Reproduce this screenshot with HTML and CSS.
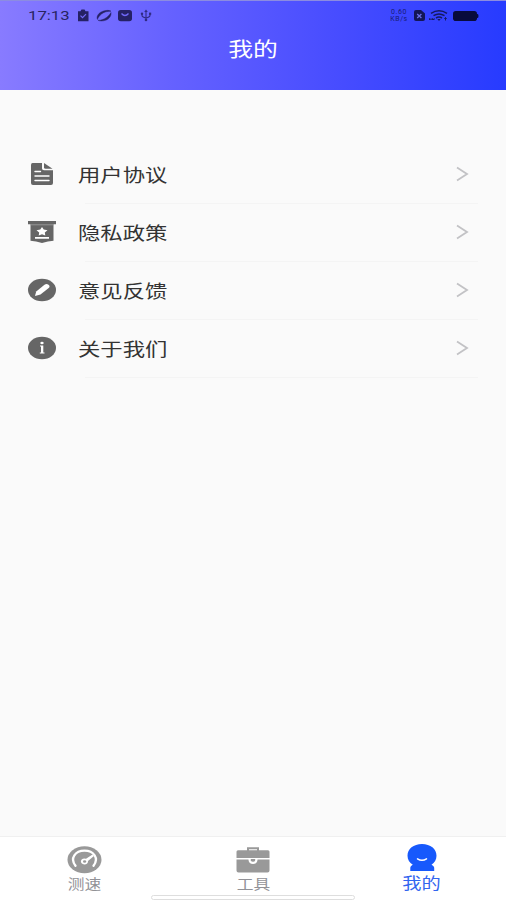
FILE: index.html
```html
<!DOCTYPE html>
<html lang="zh-CN">
<head>
<meta charset="utf-8">
<title>我的</title>
<link rel="stylesheet" href="styles.css">
</head>
<body>
<div class="app">
  <header class="header">
    <div class="status">
      <span class="clock"><span class="wide">17:13</span></span>
      <svg class="status-left" width="76" height="14" viewBox="0 0 76 14">
        <path d="M1 3.300h2.500l1-1.800h3l1 1.800H11.500v10H1z" fill="#252165"/><path d="M3.500 7.700l2 2 3.500-3.500" fill="none" stroke="#736bfa" stroke-width="1.200"/>
        <path d="M20.500 11.500c-1.500-3 1-7 6-8.500 3-1 6-.8 7.500.2-3.500 0-7 .7-9.500 2.800-2 1.700-3.500 3.500-4 5.500zM34 4.500c.5 3-1.500 6.500-5.500 7.800-3 1-6 .9-7.500 0 3 0 6-.9 8.500-2.800 2-1.500 3.600-3.200 4.500-5z" fill="#252165" stroke="#252165" stroke-width=".4"/>
        <rect x="41" y="2" width="14" height="11.300" rx="2.800" fill="#252165"/><path d="M44.500 5.500q3.500 4 7 0" fill="none" stroke="#7068f8" stroke-width="1.300"/>
        <path d="M69 3v9M65 5.500v2q0 1.500 4 2.500 4-1 4-2.500v-2" fill="none" stroke="#302a83" stroke-width="1.100"/><path d="M67.200 4L69 1.500 70.800 4z" fill="#302a83"/><circle cx="65" cy="5.800" r="1.200" fill="#302a83"/><rect x="72" y="4.600" width="2.200" height="2.200" fill="#302a83"/><circle cx="69" cy="12" r="1.300" fill="#302a83"/>
      </svg>
      <span class="rate">0.60<br>KB/s</span>
      <svg class="status-right" width="66" height="14" viewBox="0 0 66 14">
        <path d="M3 2h5l4 3.500V11q0 2-2 2H3q-2 0-2-2V4q0-2 2-2z" fill="#131655"/><path d="M4.200 6l4.200 4M8.400 6l-4.200 4" stroke="#6970e8" stroke-width="1.300"/>
        <path d="M18 5.300q8-5 16 0M20.500 7.700q5.500-3.400 11 0M23 10q3-1.800 6 0" fill="none" stroke="#151960" stroke-width="1.500"/><path d="M24.300 11h3.400L26 13z" fill="#151960"/><path d="M16.500 12v-1.500l1.500 1 1.500-1V12M20.500 12v-1h1.500M32.500 9.500v3M31.300 10.800l1.200-1.300 1.200 1.300" fill="none" stroke="#151960" stroke-width="1"/>
        <rect x="40" y="3" width="24" height="10" rx="2.800" fill="#080b3c"/><path d="M63 6h1.500q1 0 1 2t-1 2H63z" fill="#080b3c"/>
      </svg>
    </div>
    <h1 class="title"><span class="wide">我的</span></h1>
  </header>

  <main class="menu">
    <a class="row">
      <svg class="row-icon" width="28" height="24" viewBox="0 0 28 24"><path d="M4.500 1h9.500v5.500q0 1.800 2 1.800h9V21q0 2-2 2H5q-2 0-2-2V3q0-2 1.500-2z" fill="#666"/><path d="M16 1l8.500 5.800h-7q-1.500 0-1.500-1.500z" fill="#666"/><path d="M7 9.500h5.500M7 14h14M7 18.500h14" stroke="#fff" stroke-width="1.400" stroke-linecap="round"/></svg>
      <span class="label"><span class="wide">用户协议</span></span>
      <svg class="chevron" width="14" height="16" viewBox="0 0 14 16"><path d="M2 1.500L12 8 2 14.500"/></svg>
    </a>
    <a class="row">
      <svg class="row-icon" width="28" height="24" viewBox="0 0 28 24"><path d="M0 1h28v3.300H0zM2.500 4h23v16.800q-5.500.2-11.500 2.200-6-2-11.500-2.200z" fill="#666"/><path d="M2.500 4.800h23" stroke="#aaa" stroke-width=".7"/><path d="M14 7l1.700 2.600 3.800.7-2.700 2.200.5 3-3.300-1.300-3.300 1.300.5-3-2.700-2.200 3.800-.7zM7 17h14v1.800H7z" fill="#fff"/></svg>
      <span class="label"><span class="wide">隐私政策</span></span>
      <svg class="chevron" width="14" height="16" viewBox="0 0 14 16"><path d="M2 1.500L12 8 2 14.500"/></svg>
    </a>
    <a class="row">
      <svg class="row-icon" width="28" height="24" viewBox="0 0 28 24"><ellipse cx="14" cy="12" rx="14" ry="11.200" fill="#666"/><path d="M7 18l1.200-4.500 8.300-6.700q2-1.500 4 0t.2 3.300l-8.200 6.400z" fill="#fff"/></svg>
      <span class="label"><span class="wide">意见反馈</span></span>
      <svg class="chevron" width="14" height="16" viewBox="0 0 14 16"><path d="M2 1.500L12 8 2 14.500"/></svg>
    </a>
    <a class="row">
      <svg class="row-icon" width="28" height="24" viewBox="0 0 28 24"><ellipse cx="14" cy="12" rx="14" ry="11.200" fill="#666"/><path d="M12 9.500h3.300v7H16.500V17.600h-4.700v-1.100h1.200V10.600H12z" fill="#fff"/><ellipse cx="14" cy="7" rx="1.700" ry="1.300" fill="#fff"/></svg>
      <span class="label"><span class="wide">关于我们</span></span>
      <svg class="chevron" width="14" height="16" viewBox="0 0 14 16"><path d="M2 1.500L12 8 2 14.500"/></svg>
    </a>
  </main>

  <nav class="tabs">
    <a class="tab">
      <svg width="36" height="30" viewBox="0 0 36 30"><ellipse cx="18.500" cy="15.700" rx="17" ry="13.500" fill="#999"/><path d="M9.500 21.800C3.500 14 9.500 6.700 18.500 6.700S33.500 14 27.500 21.800" fill="none" stroke="#fff" stroke-width="2.300" stroke-linecap="round"/><path d="M26.500 10.500l-6.500 4.300a3.600 3 0 1 0 2 2.200l6-5z" fill="#fff"/><ellipse cx="18.600" cy="17.500" rx="1.600" ry="1.300" fill="#999"/></svg>
      <span class="tab-label"><span class="wide">测速</span></span>
    </a>
    <a class="tab">
      <svg width="36" height="30" viewBox="0 0 36 30"><path d="M13 7V4.300h10V7" fill="none" stroke="#999" stroke-width="2"/><path d="M3 6.300h30q1.500 0 1.500 1.500V14h-33V7.800Q1.500 6.300 3 6.300zM1.500 15.500h33V26.500q0 2-2 2h-29q-2 0-2-2z" fill="#999"/><path d="M13.500 14h9v2q-.5 4-4.500 4t-4.500-4z" fill="#fff"/><path d="M15.800 15h4.400v1.200q-.4 1.500-2.200 1.500t-2.200-1.500z" fill="#999"/></svg>
      <span class="tab-label"><span class="wide">工具</span></span>
    </a>
    <a class="tab active">
      <svg width="36" height="30" viewBox="0 0 36 30"><path d="M18 0c8.500 0 14.500 5 14.500 11.800 0 4-2 7-5 9 1 .5 2.700 1.500 2.700 3v3.200H6.300v-3.200c0-1.500 1.500-2.500 2.500-3-3.300-2-5.300-5-5.300-9C3.500 5 9.500 0 18 0z" fill="#1759fc"/><path d="M13.500 14.800q4.500 3 9 0" fill="none" stroke="#fff" stroke-width="1.500" stroke-linecap="round"/></svg>
      <span class="tab-label"><span class="wide">我的</span></span>
    </a>
    <div class="home-bar"></div>
  </nav>
</div>
</body>
</html>
```
FILE: styles.css
```css
* { box-sizing: border-box; }
body {
  margin: 0;
  font-family: "Noto Sans CJK SC", sans-serif;
  background: #fafafa;
}
.app {
  display: flex;
  flex-direction: column;
  height: 900px;
}
.wide {
  display: inline-block;
  transform: scaleX(1.24);
  transform-origin: left center;
  white-space: nowrap;
}
.header {
  height: 90px;
  border-top: 1px solid #8c8ce0;
  background: linear-gradient(90deg, #887bff 0%, #6662ff 33%, #484dff 66%, #273bff 100%);
}
.status {
  display: flex;
  height: 28px;
  padding: 0 27px 0 28px;
  align-items: center;
}
.clock {
  width: 49px;
  font: 13.5px/29px Roboto, sans-serif;
  color: #28245f;
}
.rate {
  width: 20px;
  margin-left: auto;
  margin-right: 4px;
  padding-top: 2px;
  font: 7px/7px Roboto, sans-serif;
  letter-spacing: .6px;
  text-align: center;
  white-space: nowrap;
  color: #171b75;
}
.title {
  margin: 0;
  font-size: 20px;
  line-height: 39px;
  font-weight: 400;
  text-align: center;
  color: #fff;
}
.title .wide, .tab .wide { transform-origin: center; }
.menu {
  flex: 1;
  padding: 56px 28px 0;
}
.row {
  display: flex;
  height: 58px;
  padding-bottom: 2px;
  align-items: center;
  background: linear-gradient(#f4f4f4, #f4f4f4) 57px 100% / 393px 1px no-repeat;
}
.row-icon { margin-right: 22px; }
.label {
  flex: 1;
  font-size: 18px;
  line-height: 28px;
  color: #333;
}
.chevron {
  margin-right: 9px;
  fill: none;
  stroke: #c2c2c5;
  stroke-width: 1.8;
}
.tabs {
  position: relative;
  display: flex;
  height: 64px;
  padding-top: 7px;
  background: #fff;
  border-top: 1px solid #f0f0f0;
}
.tab {
  display: flex;
  flex: 1;
  flex-direction: column;
  align-items: center;
}
.tab svg { display: block; }
.tab-label {
  font-size: 13.5px;
  line-height: 19px;
  color: #929297;
}
.active .tab-label { font-size: 15.5px; line-height: 17px; color: #3265ef; }
.home-bar {
  position: absolute;
  bottom: 0;
  left: 151px;
  width: 204px;
  height: 5px;
  border: 1px solid #dedede;
  border-radius: 3px;
  background: #fff;
}
```
